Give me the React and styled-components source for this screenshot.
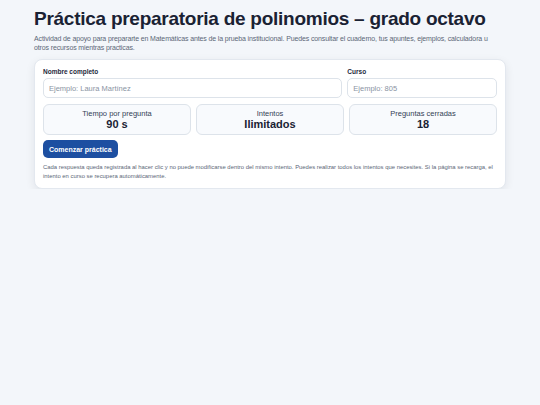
import styled, { createGlobalStyle } from 'styled-components'

const GlobalStyle = createGlobalStyle`
  * { box-sizing: border-box; }
  body {
    margin: 0;
    background: #f3f6fa;
    font-family: "Liberation Sans", Arial, sans-serif;
    color: #1e293b;
  }
`
const Page = styled.main`
  width: 472px;
  margin: 0 auto;
  padding-top: 6px;
`
const Title = styled.h1`
  margin: 0;
  font-size: 19px;
  line-height: 26px;
  letter-spacing: -0.26px;
  font-weight: bold;
  color: #1a2233;
  white-space: nowrap;
`
const Lead = styled.p`
  max-width: 460px;
  margin: 2px 0 0;
  font-size: 7px;
  line-height: 9px;
  letter-spacing: -0.13px;
  color: #5b6677;
`
const Card = styled.section`
  margin-top: 7px;
  background: #fff;
  border: 1px solid #e3e8ef;
  border-radius: 8px;
  box-shadow: 0 3px 10px rgba(15, 23, 42, 0.08);
  padding: 8px 8px 7px;
`
const Fields = styled.div`
  display: grid;
  grid-template-columns: 2fr 1fr;
  gap: 5px;
`
const Field = styled.label`
  display: flex;
  flex-direction: column;
  gap: 3px;
`
const Label = styled.span`
  font-size: 6.5px;
  font-weight: bold;
  color: #1e293b;
`
const Input = styled.input`
  height: 20px;
  border: 1px solid #dde3ea;
  border-radius: 5px;
  padding: 0 5px;
  font-family: inherit;
  font-size: 7.5px;
  color: #1e293b;
  background: #fff;
  outline: none;
  &::placeholder { color: #8a94a3; }
`
const Stats = styled.div`
  display: grid;
  grid-template-columns: repeat(3, 1fr);
  gap: 5px;
  margin-top: 6px;
`
const Stat = styled.div`
  height: 31px;
  border: 1px solid #dde3ea;
  border-radius: 6px;
  background: #f8fafd;
  display: flex;
  flex-direction: column;
  align-items: center;
  justify-content: center;
`
const StatLabel = styled.span`
  font-size: 7.5px;
  line-height: 9px;
  color: #334155;
`
const StatValue = styled.strong`
  font-size: 11px;
  line-height: 13px;
  color: #1a2233;
`
const Button = styled.button`
  margin-top: 5px;
  height: 18px;
  padding: 0 6px;
  border: 0;
  border-radius: 5px;
  background: #1d4fa1;
  color: #fff;
  font-family: inherit;
  font-size: 7px;
  font-weight: bold;
  cursor: pointer;
`
const Note = styled.p`
  margin: 5px 0 0;
  font-size: 5.9px;
  line-height: 9px;
  color: #5b6677;
`

const stats = [
  { label: 'Tiempo por pregunta', value: '90 s' },
  { label: 'Intentos', value: 'Ilimitados' },
  { label: 'Preguntas cerradas', value: '18' }
]

export default function App () {
  return (
    <>
      <GlobalStyle />
      <Page>
        <Title>Práctica preparatoria de polinomios – grado octavo</Title>
        <Lead>
          Actividad de apoyo para prepararte en Matemáticas antes de la prueba institucional. Puedes consultar el cuaderno, tus apuntes, ejemplos, calculadora u otros recursos mientras practicas.
        </Lead>
        <Card>
          <Fields>
            <Field>
              <Label>Nombre completo</Label>
              <Input placeholder='Ejemplo: Laura Martínez' />
            </Field>
            <Field>
              <Label>Curso</Label>
              <Input placeholder='Ejemplo: 805' />
            </Field>
          </Fields>
          <Stats>
            {stats.map(s => (
              <Stat key={s.label}>
                <StatLabel>{s.label}</StatLabel>
                <StatValue>{s.value}</StatValue>
              </Stat>
            ))}
          </Stats>
          <Button>Comenzar práctica</Button>
          <Note>
            Cada respuesta queda registrada al hacer clic y no puede modificarse dentro del mismo intento. Puedes realizar todos los intentos que necesites. Si la página se recarga, el intento en curso se recupera automáticamente.
          </Note>
        </Card>
      </Page>
    </>
  )
}
